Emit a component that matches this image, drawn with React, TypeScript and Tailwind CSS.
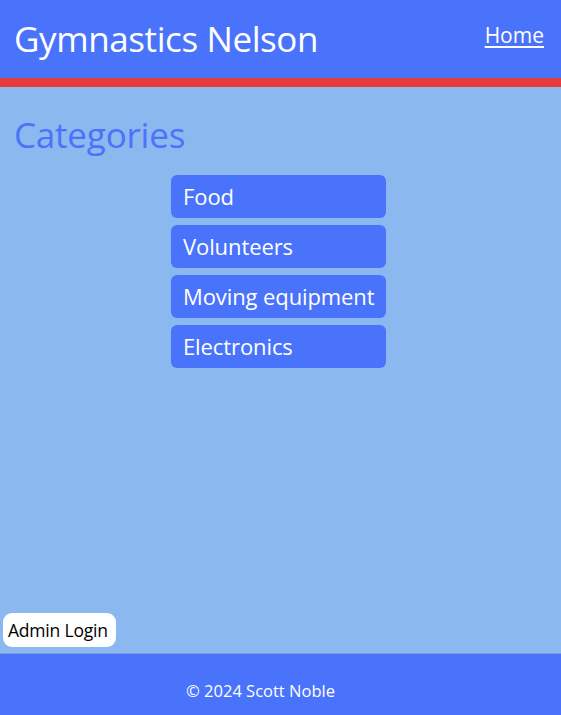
import React from "react";

export default function App() {
  const cats = ["Food", "Volunteers", "Moving equipment", "Electronics"];
  return (
    <div
      className="min-h-screen flex flex-col bg-[#8bb8ef]"
      style={{ fontFamily: '"Open Sans", "Noto Sans", sans-serif' }}
    >
      <header className="h-[78px] bg-[#4a73fb] flex items-center justify-between pl-[14px] pr-[17px] border-b-[9px] border-[#e63c3c] box-content">
        <h1 className="text-[35px] text-white leading-none tracking-[-0.4px] -mt-[2px]">Gymnastics Nelson</h1>
        <a href="#" className="text-[21px] text-white underline underline-offset-[3px] -mt-[6px]">Home</a>
      </header>
      <main className="flex-1 flex flex-col">
        <h2 className="text-[35px] text-[#4a73fb] pl-[14px] pt-[30px] leading-none tracking-[-0.2px]">Categories</h2>
        <div className="flex flex-col items-center gap-[7px] mt-[23px] pr-[4px]">
          {cats.map((c) => (
            <div
              key={c}
              className="w-[215px] h-[43px] bg-[#4a73fb] rounded-[6px] text-white text-[22px] flex items-center pl-[12px] tracking-[-0.1px] whitespace-nowrap"
            >
              {c}
            </div>
          ))}
        </div>
        <div className="flex-1" />
        <div className="pl-[3px] pb-[6px]">
          <button className="bg-white rounded-[9px] h-[34px] w-[113px] px-[5px] text-[17.5px] text-black tracking-[-0.2px] text-left whitespace-nowrap">
            Admin Login
          </button>
        </div>
      </main>
      <footer className="h-[62px] bg-[#4a73fb] border-t border-[#7a9ad8] flex items-center justify-center pt-[14px] pr-[40px]">
        <span className="text-white text-[16.5px]">© 2024 Scott Noble</span>
      </footer>
    </div>
  );
}
